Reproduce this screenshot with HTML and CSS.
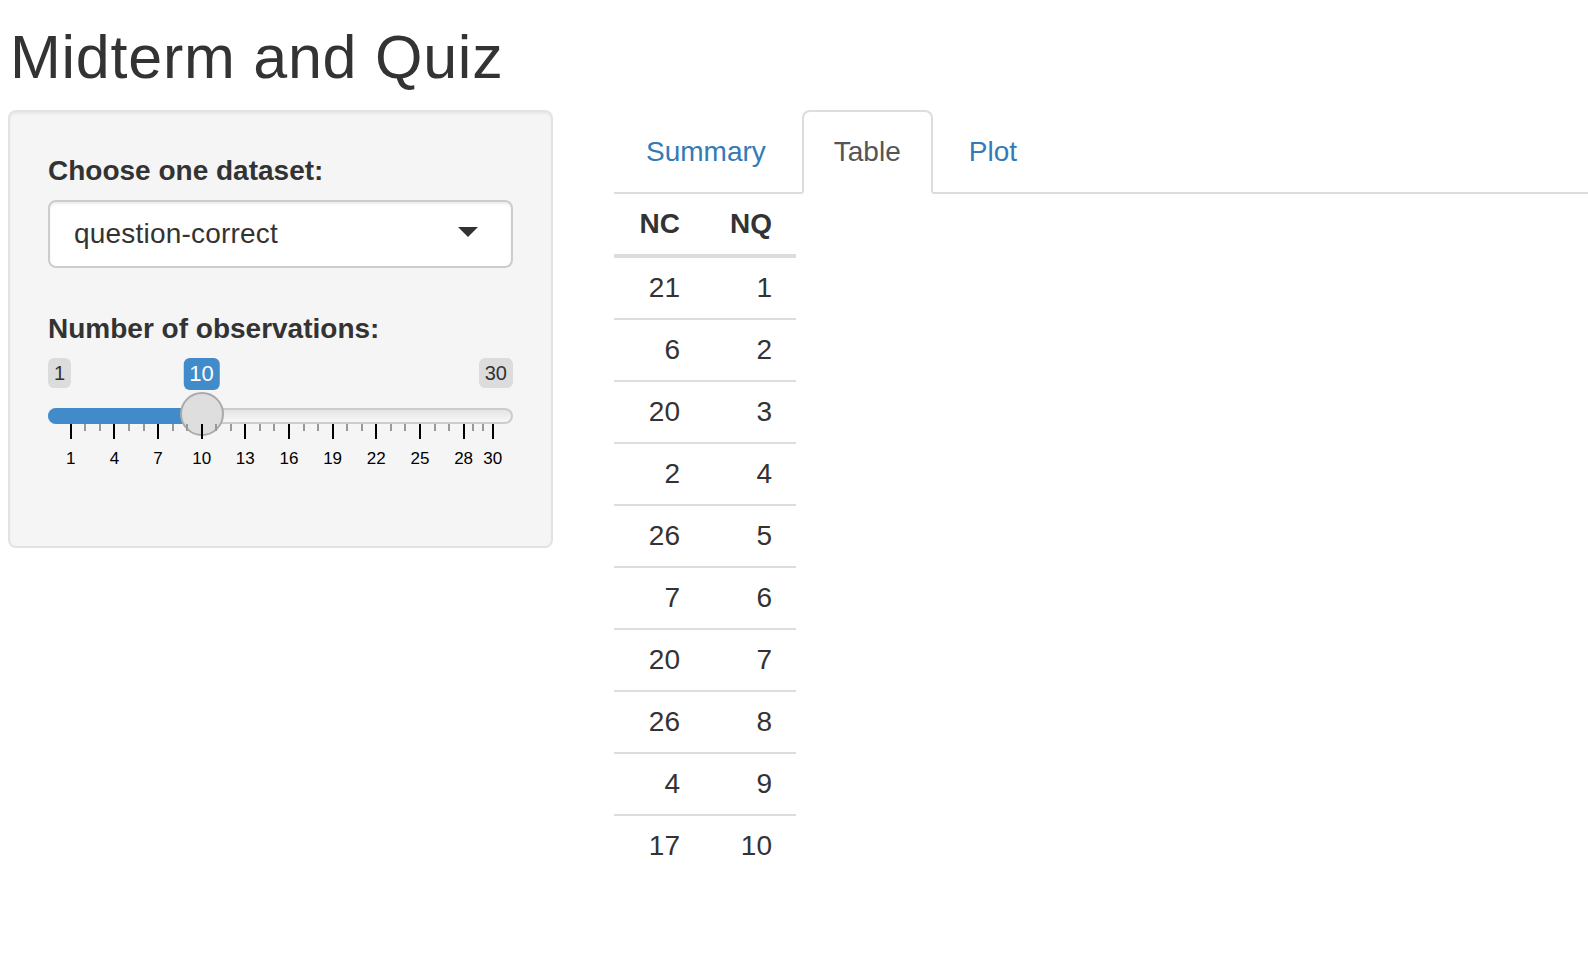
FILE: index.html
```html
<!DOCTYPE html>
<html lang="en">
<head>
<meta charset="utf-8">
<title>Midterm and Quiz</title>
<link rel="stylesheet" href="styles.css">
</head>
<body>
<div class="page">
  <h1 class="title">Midterm and Quiz</h1>
  <div class="layout">
    <aside class="well">
      <div class="form-group fg-select">
        <label class="control-label">Choose one dataset:</label>
        <div class="select"><span class="select-value">question-correct</span><span class="caret"></span></div>
      </div>
      <div class="form-group">
        <label class="control-label">Number of observations:</label>
        <div class="irs">
          <div class="irs-edges"><span class="irs-min">1</span><span class="irs-max">30</span></div>
          <div class="irs-track">
            <div class="irs-bar" style="width:153.5px"></div>
            <span class="irs-single" style="left:151.5px">10</span>
            <span class="irs-handle" style="left:129.5px"></span>
          </div>
          <div class="irs-grid">
            <span class="pol" style="left:21.7px"></span>
            <span class="pol small" style="left:36.3px"></span>
            <span class="pol small" style="left:50.8px"></span>
            <span class="pol" style="left:65.4px"></span>
            <span class="pol small" style="left:79.9px"></span>
            <span class="pol small" style="left:94.5px"></span>
            <span class="pol" style="left:109.0px"></span>
            <span class="pol small" style="left:123.6px"></span>
            <span class="pol small" style="left:138.1px"></span>
            <span class="pol" style="left:152.7px"></span>
            <span class="pol small" style="left:167.2px"></span>
            <span class="pol small" style="left:181.8px"></span>
            <span class="pol" style="left:196.3px"></span>
            <span class="pol small" style="left:210.9px"></span>
            <span class="pol small" style="left:225.4px"></span>
            <span class="pol" style="left:240.0px"></span>
            <span class="pol small" style="left:254.5px"></span>
            <span class="pol small" style="left:269.1px"></span>
            <span class="pol" style="left:283.6px"></span>
            <span class="pol small" style="left:298.2px"></span>
            <span class="pol small" style="left:312.7px"></span>
            <span class="pol" style="left:327.3px"></span>
            <span class="pol small" style="left:341.8px"></span>
            <span class="pol small" style="left:356.4px"></span>
            <span class="pol" style="left:371.0px"></span>
            <span class="pol small" style="left:385.5px"></span>
            <span class="pol small" style="left:400.0px"></span>
            <span class="pol" style="left:414.6px"></span>
            <span class="pol small" style="left:424.3px"></span>
            <span class="pol small" style="left:434.0px"></span>
            <span class="pol" style="left:443.7px"></span>
            <span class="grid-text" style="left:22.7px">1</span>
            <span class="grid-text" style="left:66.4px">4</span>
            <span class="grid-text" style="left:110.0px">7</span>
            <span class="grid-text" style="left:153.7px">10</span>
            <span class="grid-text" style="left:197.3px">13</span>
            <span class="grid-text" style="left:241.0px">16</span>
            <span class="grid-text" style="left:284.6px">19</span>
            <span class="grid-text" style="left:328.3px">22</span>
            <span class="grid-text" style="left:372.0px">25</span>
            <span class="grid-text" style="left:415.6px">28</span>
            <span class="grid-text" style="left:444.7px">30</span>
          </div>
        </div>
      </div>
    </aside>
    <main class="main">
      <ul class="nav-tabs">
        <li><a href="#">Summary</a></li>
        <li class="active"><a href="#">Table</a></li>
        <li><a href="#">Plot</a></li>
      </ul>
      <table class="data">
        <thead>
          <tr><th class="c1">NC</th><th class="c2">NQ</th></tr>
        </thead>
        <tbody>
          <tr><td>21</td><td>1</td></tr>
          <tr><td>6</td><td>2</td></tr>
          <tr><td>20</td><td>3</td></tr>
          <tr><td>2</td><td>4</td></tr>
          <tr><td>26</td><td>5</td></tr>
          <tr><td>7</td><td>6</td></tr>
          <tr><td>20</td><td>7</td></tr>
          <tr><td>26</td><td>8</td></tr>
          <tr><td>4</td><td>9</td></tr>
          <tr><td>17</td><td>10</td></tr>
        </tbody>
      </table>
    </main>
  </div>
</div>
</body>
</html>
```
FILE: styles.css
```css
* { box-sizing: border-box; }

html, body {
  margin: 0;
  padding: 0;
  background: #fff;
}

body {
  font-family: "Liberation Sans", Arial, Helvetica, sans-serif;
  font-size: 28px;
  line-height: 40px;
  color: #333;
}

.page {
  padding-left: 8px;
}

.title {
  margin: 24px 0 19px 2px;
  font-size: 61px;
  line-height: 67px;
  font-weight: 400;
  letter-spacing: 0.75px;
  color: #333;
}

.layout {
  display: flex;
  align-items: flex-start;
}

/* Sidebar well */
.well {
  width: 545px;
  flex: none;
  background: #f5f5f5;
  border: 2px solid #e3e3e3;
  border-radius: 8px;
  padding: 39px 38px 39px;
  box-shadow: inset 0 2px 2px rgba(0, 0, 0, 0.05);
}

.form-group {
  display: flex;
  flex-direction: column;
}

.fg-select {
  margin-bottom: 41px;
}

.fg-select .control-label {
  margin-bottom: 9px;
}

.control-label {
  display: block;
  font-weight: 700;
  margin-bottom: 10px;
}

.select {
  position: relative;
  height: 68px;
  background: #fff;
  border: 2px solid #ccc;
  border-radius: 8px;
  padding: 12px 24px;
  box-shadow: inset 0 2px 2px rgba(0, 0, 0, 0.075);
  color: #333;
}

.select-value {
  display: block;
  letter-spacing: 0.2px;
}

.caret {
  position: absolute;
  right: 33px;
  top: 50%;
  margin-top: -7px;
  width: 0;
  height: 0;
  border-left: 10px solid transparent;
  border-right: 10px solid transparent;
  border-top: 10px solid #333;
}

/* Range slider */
.irs {
  height: 149px;
  display: flex;
  flex-direction: column;
  margin-top: -1px;
}

.irs-edges {
  display: flex;
  justify-content: space-between;
  height: 30px;
}

.irs-min,
.irs-max {
  font-size: 20px;
  line-height: 26px;
  padding: 2px 6px;
  border-radius: 6px;
  background: rgba(0, 0, 0, 0.1);
  color: #333;
}

.irs-track {
  position: relative;
  margin-top: 20px;
  height: 16px;
  border: 2px solid #ccc;
  border-radius: 16px;
  background: linear-gradient(to bottom, #ddd -50%, #fff 150%);
}

.irs-bar {
  position: absolute;
  left: -2px;
  top: -2px;
  height: 16px;
  background: #428bca;
  border-radius: 16px 0 0 16px;
}

.irs-single {
  position: absolute;
  top: -52px;
  transform: translateX(-50%);
  font-size: 22px;
  line-height: 28px;
  padding: 2px 6px;
  border-radius: 6px;
  background: #428bca;
  color: #fff;
  white-space: nowrap;
}

.irs-handle {
  position: absolute;
  top: -18px;
  width: 44px;
  height: 44px;
  border: 2px solid #aaa;
  border-radius: 50%;
  background: #dedede;
}

.irs-grid {
  position: relative;
  flex: 1;
}

.pol {
  position: absolute;
  top: 0;
  width: 2px;
  height: 15px;
  background: #000;
}

.pol.small {
  height: 7px;
  background: #999;
}

.grid-text {
  position: absolute;
  top: 26px;
  transform: translateX(-50%);
  font-size: 17px;
  line-height: 17px;
  color: #000;
  white-space: nowrap;
}

/* Main panel */
.main {
  flex: 1;
  margin-left: 61px;
  min-width: 0;
}

.nav-tabs {
  display: flex;
  list-style: none;
  margin: 0;
  padding: 0;
  border-bottom: 2px solid #ddd;
}

.nav-tabs li {
  margin-bottom: -2px;
  margin-right: 4px;
}

.nav-tabs a {
  display: block;
  padding: 20px 30px;
  line-height: 40px;
  border: 2px solid transparent;
  border-radius: 8px 8px 0 0;
  color: #337ab7;
  text-decoration: none;
}

.nav-tabs li.active a {
  color: #555;
  background: #fff;
  border-color: #ddd;
  border-bottom-color: transparent;
}

.data {
  border-collapse: collapse;
  table-layout: fixed;
  width: 182px;
}

.data th,
.data td {
  padding: 10px 24px;
  line-height: 40px;
  text-align: right;
}

.data th {
  font-weight: 700;
  border-bottom: 4px solid #ddd;
}

.data th.c1 { width: 90px; }
.data th.c2 { width: 92px; }

.data td {
  border-top: 2px solid #ddd;
}
```
